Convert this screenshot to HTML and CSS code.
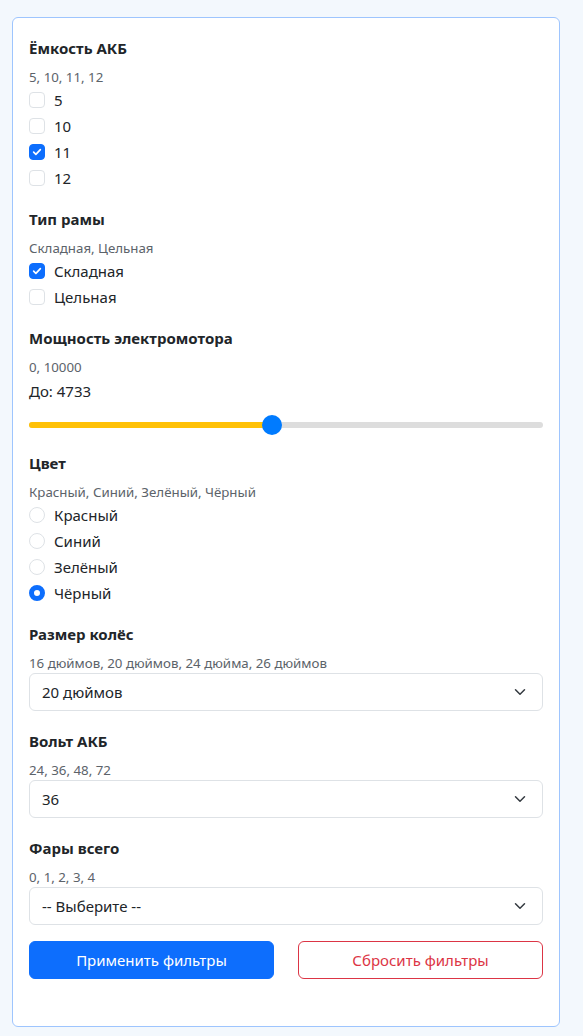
FILE: index.html
```html
<!DOCTYPE html>
<html lang="ru">
<head>
<meta charset="utf-8">
<title>Фильтры</title>
<link rel="stylesheet" href="styles.css">
</head>
<body>
<form class="card">
  <section class="group">
    <h3 class="title">Ёмкость АКБ</h3>
    <div class="hint">5, 10, 11, 12</div>
    <label class="opt"><span class="box"></span>5</label>
    <label class="opt"><span class="box"></span>10</label>
    <label class="opt"><span class="box checked"><svg viewBox="0 0 16 16" width="12" height="12"><path d="M3.5 8.2l3 3 6-6.4" fill="none" stroke="#fff" stroke-width="2.2" stroke-linecap="round" stroke-linejoin="round"/></svg></span>11</label>
    <label class="opt"><span class="box"></span>12</label>
  </section>

  <section class="group">
    <h3 class="title">Тип рамы</h3>
    <div class="hint">Складная, Цельная</div>
    <label class="opt"><span class="box checked"><svg viewBox="0 0 16 16" width="12" height="12"><path d="M3.5 8.2l3 3 6-6.4" fill="none" stroke="#fff" stroke-width="2.2" stroke-linecap="round" stroke-linejoin="round"/></svg></span>Складная</label>
    <label class="opt"><span class="box"></span>Цельная</label>
  </section>

  <section class="group">
    <h3 class="title">Мощность электромотора</h3>
    <div class="hint">0, 10000</div>
    <div class="value">До: 4733</div>
    <div class="range">
      <div class="track"><div class="fill" style="width: 47.33%"></div></div>
      <span class="thumb" style="left: 47.33%"></span>
    </div>
  </section>

  <section class="group">
    <h3 class="title">Цвет</h3>
    <div class="hint">Красный, Синий, Зелёный, Чёрный</div>
    <label class="opt"><span class="radio"></span>Красный</label>
    <label class="opt"><span class="radio"></span>Синий</label>
    <label class="opt"><span class="radio"></span>Зелёный</label>
    <label class="opt"><span class="radio checked"></span>Чёрный</label>
  </section>

  <section class="group sel">
    <h3 class="title">Размер колёс</h3>
    <div class="hint">16 дюймов, 20 дюймов, 24 дюйма, 26 дюймов</div>
    <div class="select"><span>20 дюймов</span><svg class="chev" viewBox="0 0 16 16" width="12" height="12"><path d="M2 5l6 6 6-6" fill="none" stroke="#343a40" stroke-width="2" stroke-linecap="round" stroke-linejoin="round"/></svg></div>
  </section>

  <section class="group sel">
    <h3 class="title">Вольт АКБ</h3>
    <div class="hint">24, 36, 48, 72</div>
    <div class="select"><span>36</span><svg class="chev" viewBox="0 0 16 16" width="12" height="12"><path d="M2 5l6 6 6-6" fill="none" stroke="#343a40" stroke-width="2" stroke-linecap="round" stroke-linejoin="round"/></svg></div>
  </section>

  <section class="group sel last">
    <h3 class="title">Фары всего</h3>
    <div class="hint">0, 1, 2, 3, 4</div>
    <div class="select"><span>-- Выберите --</span><svg class="chev" viewBox="0 0 16 16" width="12" height="12"><path d="M2 5l6 6 6-6" fill="none" stroke="#343a40" stroke-width="2" stroke-linecap="round" stroke-linejoin="round"/></svg></div>
  </section>

  <div class="actions">
    <button type="button" class="btn primary">Применить фильтры</button>
    <button type="button" class="btn danger">Сбросить фильтры</button>
  </div>
</form>
</body>
</html>
```

FILE: styles.css
```css
* { box-sizing: border-box; }
html, body { margin: 0; padding: 0; }
body {
  background: #f3f8fd;
  font-family: "Noto Sans", "Open Sans", sans-serif;
  font-size: 15px;
  color: #212529;
  padding: 17px 23px 10px 12px;
}
.card {
  background: #fff;
  border: 1px solid #9ec5fe;
  border-radius: 6px;
  padding: 19px 16px 47px 16px;
  min-height: 1009px;
}
.group { margin-bottom: 17px; }
.group.sel { margin-bottom: 19px; }
.group.last { margin-bottom: 16px; }
.title {
  margin: 0 0 8px;
  font-size: 15px;
  font-weight: 700;
  line-height: 22px;
}
.hint {
  font-size: 13.3px;
  line-height: 20px;
  color: #5c636a;
}
.opt {
  display: flex;
  align-items: center;
  height: 26px;
  gap: 9px;
  line-height: 26px;
}
.box, .radio {
  width: 16px;
  height: 16px;
  border: 1px solid #dee2e6;
  background: #fff;
  display: flex;
  align-items: center;
  justify-content: center;
  flex: none;
}
.box { border-radius: 4px; }
.box.checked { background: #0d6efd; border-color: #0d6efd; }
.radio { border-radius: 50%; }
.radio.checked { border: 5px solid #0d6efd; }
.value {
  line-height: 24px;
  margin-top: 2px;
}
.range {
  position: relative;
  height: 20px;
  margin-top: 12px;
  display: flex;
  align-items: center;
}
.track {
  width: 100%;
  height: 6px;
  border-radius: 3px;
  background: #dddddd;
  overflow: hidden;
}
.fill { height: 100%; background: #ffc107; }
.thumb {
  position: absolute;
  top: 0;
  width: 20px;
  height: 20px;
  margin-left: -10px;
  border-radius: 50%;
  background: #007bff;
}
.select {
  position: relative;
  height: 38px;
  border: 1px solid #dee2e6;
  border-radius: 6px;
  padding: 0 36px 0 12px;
  display: flex;
  align-items: center;
}
.chev { position: absolute; right: 16px; top: 12px; }
.actions {
  display: flex;
  gap: 24px;
}
.btn {
  flex: 1;
  height: 38px;
  border-radius: 6px;
  font-family: inherit;
  font-size: 15px;
}
.primary { background: #0d6efd; border: 1px solid #0d6efd; color: #fff; }
.danger { background: #fff; border: 1px solid #dc3545; color: #dc3545; }
```
